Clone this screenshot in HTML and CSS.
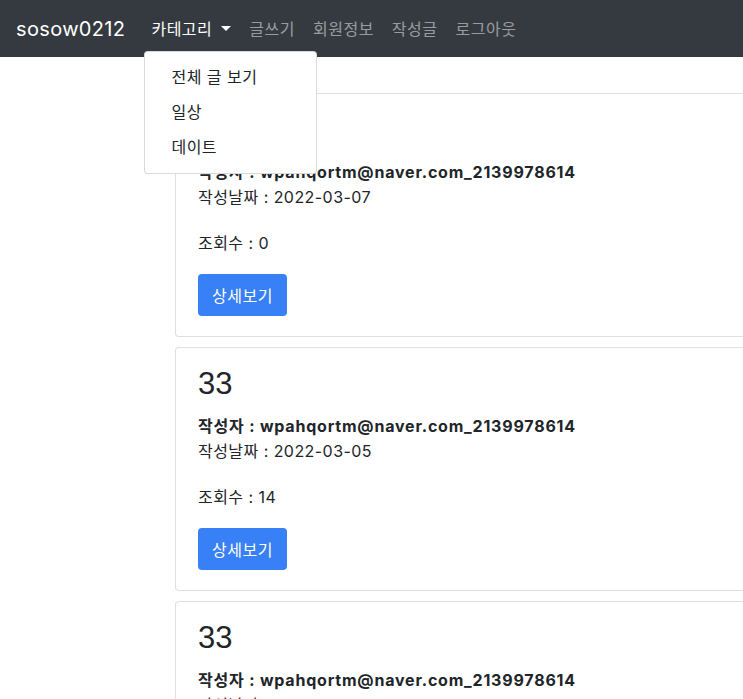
FILE: index.html
```html
<!DOCTYPE html>
<html>
<head>
    <title>sosow0212</title>
    <link rel="stylesheet" href="styles.css">
</head>
<body>
    <!-- Top navigation -->
    <nav class="navbar">
        <a class="brand" href="#">sosow0212</a>
        <ul class="nav">
            <li class="nav-item dropdown">
                <a class="nav-link active toggle" href="#">카테고리</a>
                <!-- Open category menu -->
                <div class="dropdown-menu">
                    <a class="dropdown-item" href="#">전체 글 보기</a>
                    <a class="dropdown-item" href="#">일상</a>
                    <a class="dropdown-item" href="#">데이트</a>
                </div>
            </li>
            <li class="nav-item"><a class="nav-link" href="#">글쓰기</a></li>
            <li class="nav-item"><a class="nav-link" href="#">회원정보</a></li>
            <li class="nav-item"><a class="nav-link" href="#">작성글</a></li>
            <li class="nav-item"><a class="nav-link" href="#">로그아웃</a></li>
        </ul>
    </nav>

    <!-- Post list -->
    <main class="post-list">
        <div class="card">
            <div class="card-body">
                <h2 class="card-title">33</h2>
                <p class="writer">작성자 : wpahqortm@naver.com_2139978614</p>
                <p class="date">작성날짜 : 2022-03-07</p>
                <p class="views">조회수 : 0</p>
                <button class="btn">상세보기</button>
            </div>
        </div>

        <div class="card">
            <div class="card-body">
                <h2 class="card-title">33</h2>
                <p class="writer">작성자 : wpahqortm@naver.com_2139978614</p>
                <p class="date">작성날짜 : 2022-03-05</p>
                <p class="views">조회수 : 14</p>
                <button class="btn">상세보기</button>
            </div>
        </div>

        <div class="card">
            <div class="card-body">
                <h2 class="card-title">33</h2>
                <p class="writer">작성자 : wpahqortm@naver.com_2139978614</p>
                <p class="date">작성날짜 : 2022-03-05</p>
                <p class="views">조회수 : 3</p>
                <button class="btn">상세보기</button>
            </div>
        </div>
    </main>
</body>
</html>
```

FILE: styles.css
```css
/* Global styles */
html, body {
    overflow: hidden;
}

body {
    margin: 0;
    font-family: Inter, "Noto Sans CJK KR", sans-serif;
    font-size: 16px;
    color: #212529;
    background-color: #fff;
}

a {
    text-decoration: none;
}

/* Navbar */
.navbar {
    display: flex;
    align-items: center;
    height: 57px;
    padding: 0 16px;
    background-color: #343a40;
}

.brand {
    font-size: 20px;
    line-height: 30px;
    letter-spacing: 0.35px;
    color: #fff;
    margin-right: 17px;
}

.nav {
    display: flex;
    list-style: none;
    margin: 0;
    padding: 0;
}

.nav-item {
    position: relative;
}

.nav-link {
    display: block;
    padding: 8px 9px;
    line-height: 24px;
    letter-spacing: 0.5px;
    color: rgba(255, 255, 255, 0.5);
}

.nav-link.active {
    color: #fff;
}

/* Caret after the category link */
.toggle::after {
    content: "";
    display: inline-block;
    margin-left: 9px;
    vertical-align: 4px;
    border-top: 5px solid;
    border-left: 5px solid transparent;
    border-right: 5px solid transparent;
}

/* Dropdown menu */
.dropdown-menu {
    position: absolute;
    top: 100%;
    left: 2px;
    margin-top: 2px;
    width: 171px;
    padding: 8px 0;
    background-color: #fff;
    border: 1px solid rgba(0, 0, 0, 0.15);
    border-radius: 4px;
    z-index: 10;
}

.dropdown-item {
    display: block;
    padding: 5px 26px;
    line-height: 25px;
    letter-spacing: 0.5px;
    color: #212529;
}

/* Cards */
.post-list {
    padding: 36px 0 0 175px;
}

.card {
    width: 900px;
    margin-bottom: 10px;
    border: 1px solid rgba(0, 0, 0, 0.125);
    border-radius: 4px;
    background-color: #fff;
}

.card-body {
    padding: 20px 22px;
}

.card-title {
    margin: 0 0 14px;
    font-family: "Liberation Sans", sans-serif;
    font-size: 31px;
    line-height: 32px;
    font-weight: normal;
}

.card-body p {
    margin: 0;
    line-height: 25px;
    letter-spacing: 0.45px;
}

.card-body .writer {
    font-weight: bold;
    letter-spacing: 0.8px;
}

.card-body .views {
    margin-top: 21px;
}

/* Button */
.btn {
    display: block;
    margin-top: 18px;
    height: 42px;
    padding: 0 14px;
    font-family: inherit;
    font-size: 16px;
    letter-spacing: 0.5px;
    color: #fff;
    background-color: #3780f5;
    border: none;
    border-radius: 4px;
    cursor: pointer;
}
```
